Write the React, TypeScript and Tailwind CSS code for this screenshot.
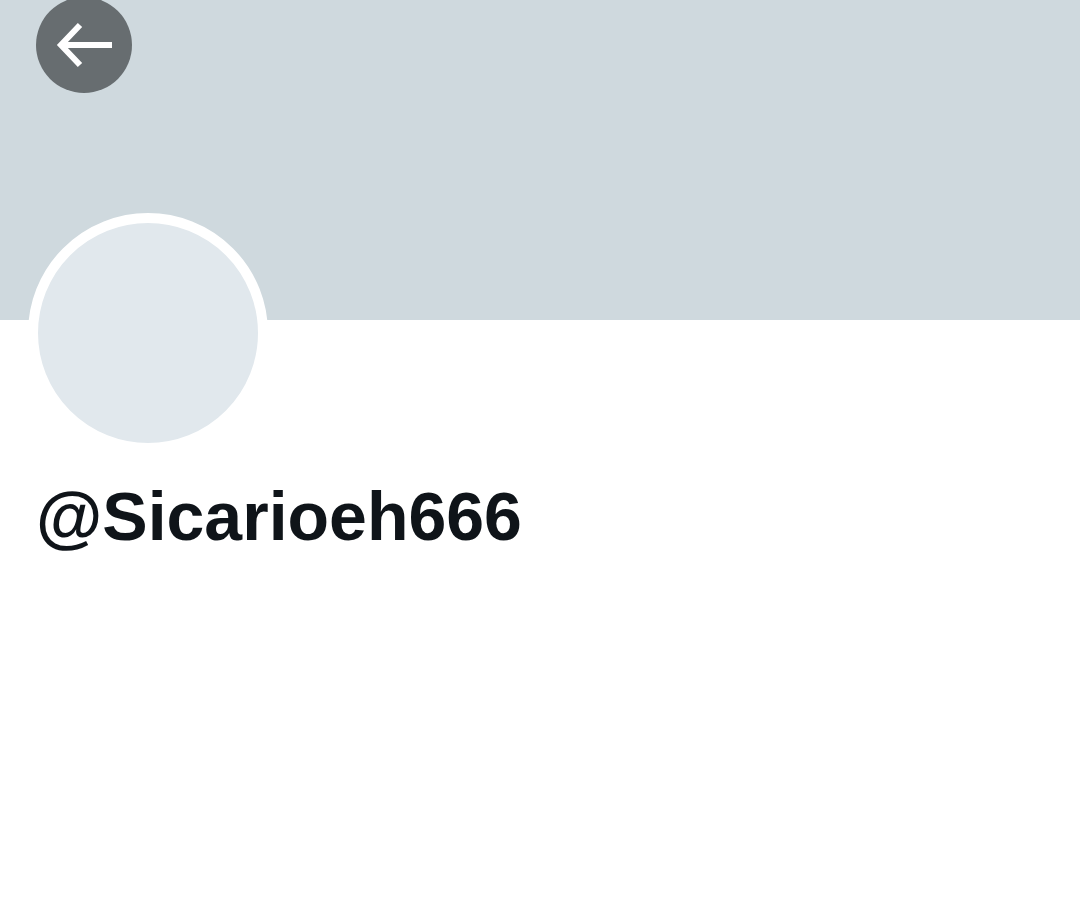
export default function App() {
  return (
    <div className="w-[1080px] h-[903px] bg-white overflow-hidden" style={{ fontFamily: '"Liberation Sans", Arial, sans-serif' }}>
      <div className="h-[320px] bg-[#cfd9de] relative">
        <button className="absolute left-[36px] top-[-3px] w-[96px] h-[96px] rounded-full bg-[#676d70]">
          <svg width="96" height="96" viewBox="0 0 96 96" fill="none" stroke="white" strokeWidth="6">
            <path d="M25 48H76" />
            <path d="M44 28L25 48L44 68" strokeLinejoin="miter" />
          </svg>
        </button>
      </div>
      <div className="px-[28px]">
        <div className="relative -mt-[107px] w-[240px] h-[240px] rounded-full border-[10px] border-white bg-[#e1e8ed]" />
        <h1 className="mt-[23px] text-[68px] leading-[80px] font-bold text-[#0f1419] pl-[8px]">@Sicarioeh666</h1>
      </div>
    </div>
  );
}
